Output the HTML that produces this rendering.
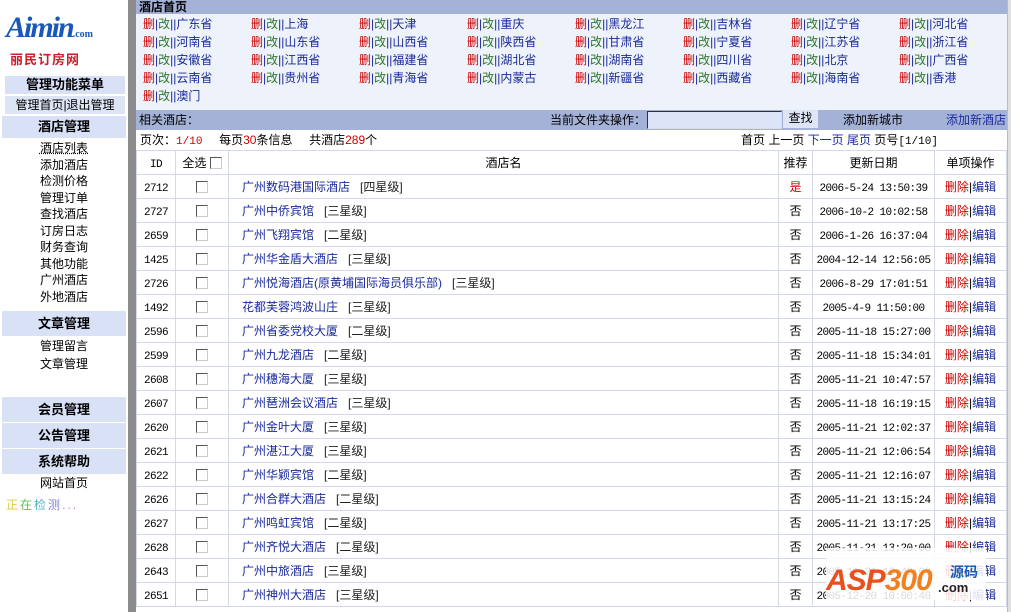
<!DOCTYPE html><html><head><meta charset="utf-8"><style>
*{margin:0;padding:0;box-sizing:border-box}
body{width:1011px;height:612px;overflow:hidden;background:#fff;font:12px "Liberation Sans","Noto Sans CJK SC",sans-serif;color:#000;position:relative}
.side{position:absolute;left:0;top:0;width:128px;height:612px;background:#fff}
.gbar{position:absolute;left:128px;top:0;width:8px;height:612px;background:#8c8c8c}
.rbar{position:absolute;left:1007px;top:0;width:4px;height:612px;background:#e0e0e0;border-left:1px solid #bbb}
.main{position:absolute;left:136px;top:0;width:871px;height:612px;overflow:hidden}
.hd{height:14px;background:#a5b2d8;font-weight:bold;font-size:12px;line-height:14px;padding-left:3px}
.cities{background:#eef2fb;height:96px;position:relative}
.c{position:absolute;font-size:12px;line-height:14px;white-space:nowrap;color:#1a2a9a}
.c .d{color:#c00}.c .g{color:#2a7a2a}
.bar2{position:absolute;top:110px;left:0;width:871px;height:20px;background:#a5b2d8;line-height:20px}
.sh{background:#d8e1f6;font-weight:bold;text-align:center;height:22px;line-height:22px;font-size:13px;margin:0 2px}
.it{text-align:center;line-height:16.5px;font-size:12px}
table{border-collapse:collapse;position:absolute;left:0;top:150px;width:871px;table-layout:fixed}
td{border:1px solid #d4d9e6;height:24px;line-height:22px;text-align:center;font-size:12px;padding:0;white-space:nowrap;overflow:hidden;vertical-align:middle}
td.m{font-family:"Liberation Mono",monospace;font-size:11px;letter-spacing:-0.6px;line-height:18px;padding-top:4px}
td.n{text-align:left;padding-left:13px;color:#1a2a9a}
td.n span{color:#222;margin-left:10px}
.cb{display:inline-block;width:12px;height:12px;border:1px solid #555;border-right-color:#ccc;border-bottom-color:#ccc;vertical-align:middle;background:#fff}
.r{color:#c00}.b{color:#1a2a9a}
.mo{font-family:"Liberation Mono",monospace;font-size:11px}
</style></head><body>
<div class="side">
<div style="position:absolute;left:6px;top:14px;width:118px;height:46px">
<div style="font:italic bold 30px 'Liberation Serif',serif;color:#1a58b8;line-height:28px;letter-spacing:-2px">Aimin<span style="font-size:10px;font-style:normal;letter-spacing:0">.com</span></div>
<div style="color:#c8202a;font-size:13px;font-weight:bold;margin-left:4px;letter-spacing:1px">丽民订房网</div>
</div>
<div style="position:absolute;top:76px;left:3px;width:124px">
<div class="sh" style="height:18px;line-height:18px">管理功能菜单</div>
<div style="background:#dde4f4;text-align:center;height:18px;line-height:18px;margin:2px 2px 0">管理首页|退出管理</div>
</div>
<div style="position:absolute;top:116px;left:0;width:128px">
<div class="sh">酒店管理</div>
<div style="padding-top:2px">
<div class="it" style="text-decoration:underline dotted">酒店列表</div><div class="it">添加酒店</div><div class="it">检测价格</div><div class="it">管理订单</div><div class="it">查找酒店</div><div class="it">订房日志</div><div class="it">财务查询</div><div class="it">其他功能</div><div class="it">广州酒店</div><div class="it">外地酒店</div>
</div></div>
<div style="position:absolute;top:311px;left:0;width:128px">
<div class="sh" style="height:25px;line-height:25px">文章管理</div>
<div class="it" style="line-height:20px">管理留言</div><div class="it" style="line-height:16px">文章管理</div></div>
<div style="position:absolute;top:397px;left:0;width:128px">
<div class="sh" style="height:25px;line-height:25px">会员管理</div>
<div class="sh" style="height:25px;line-height:25px;margin-top:1px">公告管理</div>
<div class="sh" style="height:25px;line-height:25px;margin-top:1px">系统帮助</div>
<div class="it" style="line-height:18px">网站首页</div>
<div style="padding-left:6px;margin-top:4px;font-size:12px;letter-spacing:2px"><span style="color:#ddcc30">正</span><span style="color:#5fc060">在</span><span style="color:#50b8c8">检</span><span style="color:#8080e0">测</span><span style="color:#d070d0">...</span></div>
</div>
</div>
<div class="gbar"></div>
<div class="main">
<div class="hd">酒店首页</div>
<div class="cities" id="cs"></div>
<div class="bar2"><span style="padding-left:3px">相关酒店：</span>
<span style="position:absolute;left:414px">当前文件夹操作：</span>
<span style="position:absolute;left:511px;top:1px;width:135px;height:18px;background:#dde4f8;border:1px solid #333;border-right-color:#ddd;border-bottom-color:#ddd"></span>
<span style="position:absolute;left:647px;top:0;width:35px;height:18px;line-height:16px;text-align:center;background:#dfe5f6">查找</span>
<span style="position:absolute;left:707px">添加新城市</span>
<span style="position:absolute;left:810px;color:#1a2a9a">添加新酒店</span></div>
<div style="position:absolute;top:132px;left:4px;line-height:16px">页次：<span class="r mo">1/10</span>&nbsp;&nbsp;&nbsp;&nbsp;&nbsp;每页<span class="r">30</span>条信息&nbsp;&nbsp;&nbsp;&nbsp;&nbsp;共酒店<span class="r">289</span>个</div>
<div style="position:absolute;top:132px;left:605px;line-height:16px">首页 上一页 <span class="b">下一页 尾页</span> 页号<span class="mo">[1/10]</span></div>
<table id="t"><colgroup><col style="width:39px"><col style="width:53px"><col><col style="width:34px"><col style="width:122px"><col style="width:72px"></colgroup><tr><td class="m">ID</td><td>全选 <span class="cb"></span></td><td>酒店名</td><td>推荐</td><td>更新日期</td><td>单项操作</td></tr></table>
<div style="position:absolute;left:690px;top:548px;width:160px;height:52px;background:rgba(255,255,255,.85)">
<div style="position:absolute;left:0;top:16px;font:italic bold 30px 'Liberation Sans',sans-serif;color:#e8501e;letter-spacing:-1px">ASP<span style="color:#f08020">300</span></div>
<div style="position:absolute;left:124px;top:14px;color:#1a5ab0;font-weight:bold;font-size:14px">源码</div>
<div style="position:absolute;left:112px;top:32px;color:#222;font-weight:bold;font-size:13px">.com</div></div>
</div>
<div class="rbar"></div>
<script>
var cs=["广东省","上海","天津","重庆","黑龙江","吉林省","辽宁省","河北省","河南省","山东省","山西省","陕西省","甘肃省","宁夏省","江苏省","浙江省","安徽省","江西省","福建省","湖北省","湖南省","四川省","北京","广西省","云南省","贵州省","青海省","内蒙古","新疆省","西藏省","海南省","香港","澳门"];
var h="";cs.forEach(function(c,i){h+='<div class="c" style="left:'+(7+108*(i%8))+'px;top:'+(3+18*Math.floor(i/8))+'px"><span class="d">删</span>|<span class="g">改</span>||'+c+'</div>'});
document.getElementById("cs").innerHTML=h;
var rows=[["2712","广州数码港国际酒店","四星级","是","2006-5-24 13:50:39"],["2727","广州中侨宾馆","三星级","否","2006-10-2 10:02:58"],["2659","广州飞翔宾馆","二星级","否","2006-1-26 16:37:04"],["1425","广州华金盾大酒店","三星级","否","2004-12-14 12:56:05"],["2726","广州悦海酒店(原黄埔国际海员俱乐部)","三星级","否","2006-8-29 17:01:51"],["1492","花都芙蓉鸿波山庄","三星级","否","2005-4-9 11:50:00"],["2596","广州省委党校大厦","二星级","否","2005-11-18 15:27:00"],["2599","广州九龙酒店","二星级","否","2005-11-18 15:34:01"],["2608","广州穗海大厦","三星级","否","2005-11-21 10:47:57"],["2607","广州琶洲会议酒店","三星级","否","2005-11-18 16:19:15"],["2620","广州金叶大厦","三星级","否","2005-11-21 12:02:37"],["2621","广州湛江大厦","三星级","否","2005-11-21 12:06:54"],["2622","广州华颖宾馆","二星级","否","2005-11-21 12:16:07"],["2626","广州合群大酒店","二星级","否","2005-11-21 13:15:24"],["2627","广州鸣虹宾馆","二星级","否","2005-11-21 13:17:25"],["2628","广州齐悦大酒店","二星级","否","2005-11-21 13:20:00"],["2643","广州中旅酒店","三星级","否","2005-11-21 13:40:00"],["2651","广州神州大酒店","三星级","否","2005-12-20 10:00:40"]];
var t="";rows.forEach(function(r){t+='<tr><td class="m">'+r[0]+'</td><td><span class="cb"></span></td><td class="n">'+r[1]+'<span>['+r[2]+']</span></td><td'+(r[3]=="是"?' class="r"':'')+'>'+r[3]+'</td><td class="m">'+r[4]+'</td><td><span class="r">删除</span>|<span class="b">编辑</span></td></tr>'});
document.getElementById("t").insertAdjacentHTML("beforeend",t);
</script>
</body></html>
